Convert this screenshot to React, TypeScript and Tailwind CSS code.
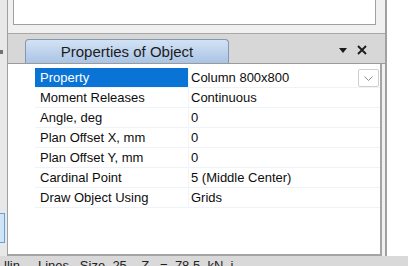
import React from "react";

const rows: [string, string][] = [
  ["Property", "Column 800x800"],
  ["Moment Releases", "Continuous"],
  ["Angle, deg", "0"],
  ["Plan Offset X, mm", "0"],
  ["Plan Offset Y, mm", "0"],
  ["Cardinal Point", "5 (Middle Center)"],
  ["Draw Object Using", "Grids"],
];

export default function App() {
  return (
    <div
      className="w-[408px] h-[266px] overflow-hidden flex flex-col bg-white"
      style={{ fontFamily: '"Liberation Sans", Arial, sans-serif' }}
    >
      <div className="flex h-[256px]">
        {/* left strip */}
        <div className="w-[7px] bg-[#e8e8e8] flex flex-col">
          <div className="h-[50px]" />
          <div className="h-[4px] w-[3px] bg-[#707070]" />
          <div className="h-[159px]" />
          <div className="h-[30px] w-[5px] bg-[#cfe4f7] border border-l-0 border-[#5fa2dd]" />
        </div>
        <div className="w-px bg-[#a0a0a0]" />
        {/* dock */}
        <div className="w-[377px] bg-[#f0f0f0] flex flex-col">
          <div className="ml-[5px] w-[363px] h-[25px] bg-white border-x border-b border-[#a0a0a0]" />
          <div className="h-[8px]" />
          {/* tab strip */}
          <div className="h-[31px] bg-[#d7d7d7] border-t border-[#a8a8a8] border-b border-b-[#9a9a9a] flex items-end relative">
            <div className="ml-[17px] w-[204px] h-[24px] rounded-t-[4px] border border-b-0 border-[#8497b0] bg-gradient-to-b from-[#d3e2f4] to-[#aac4e5] flex items-center justify-center text-[15px] text-[#1c1c1c] leading-none">
              Properties of Object
            </div>
            <div className="absolute right-[18px] top-[11px] flex items-center gap-[10px]">
              <svg width="8" height="5" viewBox="0 0 8 5">
                <path d="M0 0 H8 L4 5 Z" fill="#1a1a1a" />
              </svg>
              <svg width="10" height="10" viewBox="0 0 10 10">
                <path d="M1 1 L9 9 M9 1 L1 9" stroke="#1a1a1a" strokeWidth="1.8" />
              </svg>
            </div>
          </div>
          {/* grid panel */}
          <div className="w-[374px] flex-1 bg-white border-r-2 border-b-2 border-[#a4a4a4] pt-[4px] text-[13px] leading-none">
            {rows.map(([k, v], i) => (
              <div key={k} className="flex h-[20px]">
                <div className="w-[27px]" />
                <div
                  className={
                    i === 0
                      ? "w-[153px] bg-[#0a74d6] text-white flex items-center pl-[5px] border-b border-[#eef2f9]"
                      : "w-[153px] text-[#0d0d0d] flex items-center pl-[5px] border-b border-[#eef2f9]"
                  }
                >
                  {k}
                </div>
                <div className="w-[1px] bg-[#f1f4fa]" />
                <div className="flex-1 flex items-center pl-[2px] text-[#0d0d0d] border-b border-[#eef2f9] relative">
                  {v}
                  {i === 0 && (
                    <div className="absolute right-[1px] top-[1px] w-[21px] h-[18px] border border-[#cfcfcf] rounded-[2px] bg-white flex items-center justify-center">
                      <svg width="9" height="5" viewBox="0 0 9 5">
                        <path d="M0.5 0.5 L4.5 4.5 L8.5 0.5" stroke="#8a8a8a" strokeWidth="1" fill="none" />
                      </svg>
                    </div>
                  )}
                </div>
              </div>
            ))}
          </div>
        </div>
        <div className="w-[2px] bg-[#a0a0a0]" />
        <div className="flex-1 bg-white" />
      </div>
      {/* status bar */}
      <div className="h-[10px] bg-[#d9d9d9] relative overflow-hidden text-[13px] text-[#222]">
        <div className="absolute top-[3px] left-[4px] whitespace-pre leading-none">
          {"llin...  Lines   Size  25    Z   =  78.5  kN  i"}
        </div>
      </div>
    </div>
  );
}
